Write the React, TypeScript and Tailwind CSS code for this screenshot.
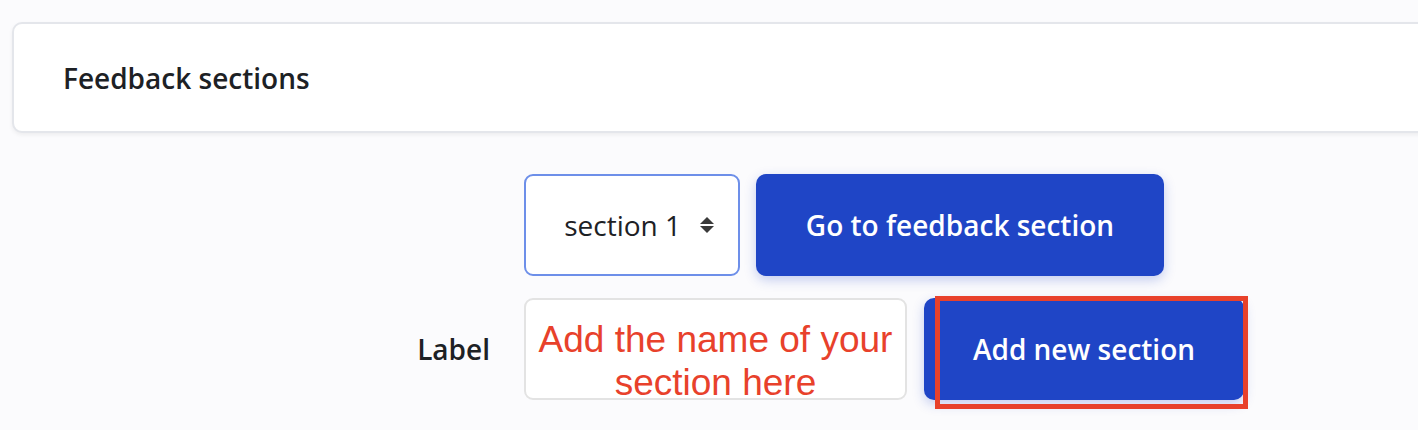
export default function App() {
  return (
    <div className="min-h-[430px] w-[1418px] overflow-hidden bg-[#fbfbfd] pt-[22px] font-['Open_Sans',sans-serif] text-[#1d2125]">
      {/* Header card */}
      <div className="ml-[12px] flex h-[111px] w-[1420px] items-center rounded-[10px] border-2 border-[#e4e6eb] bg-white pl-[49px] shadow-[0_2px_4px_rgba(0,0,0,0.06)]">
        <h2 className="text-[28px] font-semibold">Feedback sections</h2>
      </div>

      <div className="mt-[41px] flex flex-col gap-[22px]">
        {/* Jump to section */}
        <div className="flex items-center">
          <div className="w-[524px]" />
          <div className="flex h-[102px] w-[216px] items-center justify-end rounded-[9px] border-2 border-[#6d8fe9] bg-white pr-[24px]">
            <span className="text-[28px]">section 1</span>
            <svg className="ml-[19px]" width="14" height="18" viewBox="0 0 14 18">
              <path d="M7 1 L14 8 L0 8 Z" fill="#3a3a3a" />
              <path d="M0 10 L14 10 L7 17 Z" fill="#3a3a3a" />
            </svg>
          </div>
          <button className="ml-[16px] flex h-[102px] w-[408px] items-center justify-center rounded-[10px] bg-[#1f45c6] text-[28px] font-semibold text-white shadow-[0_4px_12px_rgba(31,69,198,0.25)]">
            Go to feedback section
          </button>
        </div>

        {/* Add section */}
        <div className="flex items-center">
          <label className="w-[524px] pr-[34px] text-right text-[28px] font-semibold">Label</label>
          <div className="flex h-[102px] w-[383px] justify-center rounded-[9px] border-2 border-[#e3e3e3] bg-white pt-[18px] text-center font-['Liberation_Sans',Arial,sans-serif] text-[37px] leading-[43px] text-[#e8412b]">
            <span>
              Add the name of your
              <br />
              section here
            </span>
          </div>
          <div className="relative ml-[17px]">
            <button className="flex h-[102px] w-[320px] items-center justify-center rounded-[10px] bg-[#1f45c6] text-[28px] font-semibold text-white shadow-[0_4px_12px_rgba(31,69,198,0.25)]">
              Add new section
            </button>
            <div className="absolute left-[11px] top-[-2px] h-[113px] w-[313px] border-[5px] border-[#e8412b]" />
          </div>
        </div>
      </div>
    </div>
  );
}
